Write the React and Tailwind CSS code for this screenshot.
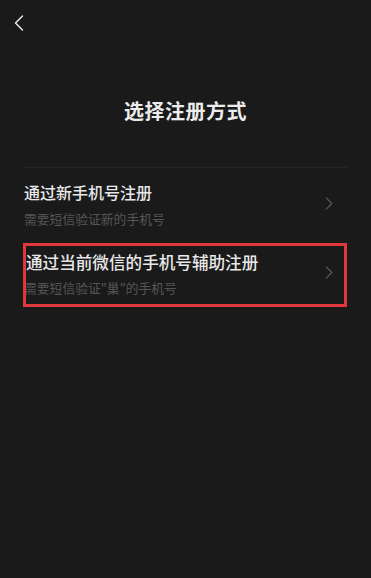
import React from "react";

function Chevron({ className, dir = "right" }) {
  return (
    <svg className={className} viewBox="0 0 10 16" fill="none" stroke="currentColor" strokeWidth="1.4" strokeLinecap="round" strokeLinejoin="round">
      {dir === "left" ? <path d="M8.5 1 L1.5 8 L8.5 15" /> : <path d="M1.5 1 L8.5 8 L1.5 15" />}
    </svg>
  );
}

export default function App() {
  return (
    <div
      className="relative w-full h-[578px] overflow-hidden bg-[#1a1a1a]"
      style={{ fontFamily: '"Noto Sans CJK SC", "Noto Sans", sans-serif' }}
    >
      <div className="h-[44px] pl-[14px] pt-[14px]">
        <Chevron dir="left" className="w-[10px] h-[18px] text-[#f0f0f0]" />
      </div>

      <h1 className="mt-[53px] h-[28px] text-center text-[20px] leading-[28px] font-bold text-[#ececec] tracking-[0.5px]">
        选择注册方式
      </h1>

      <div className="mt-[42px] ml-[23px] mr-[24px] border-t border-[#262626]" />

      <div className="relative pl-[24px] pr-[38px]">
        <div className="flex items-start justify-between">
          <div className="pt-[13px]">
            <p className="text-[16px] leading-[22px] font-medium text-[#e8e8e8]">通过新手机号注册</p>
            <p className="mt-[7px] text-[12.8px] leading-[18px] text-[#555555]">需要短信验证新的手机号</p>
          </div>
          <Chevron className="mt-[29px] w-[8px] h-[13px] text-[#5a5a5a]" />
        </div>

        <div className="flex items-start justify-between">
          <div className="pt-[23px]">
            <p className="pl-[2px] text-[16.6px] leading-[22px] font-medium text-[#e8e8e8]">通过当前微信的手机号辅助注册</p>
            <p className="mt-[6px] text-[12.8px] leading-[18px] text-[#555555]">需要短信验证"巢"的手机号</p>
          </div>
          <Chevron className="mt-[38px] w-[8px] h-[13px] text-[#5a5a5a]" />
        </div>

        <div className="absolute left-[23px] top-[75px] w-[324px] h-[64px] border-[3px] border-[#e1373c]" />
      </div>
    </div>
  );
}
